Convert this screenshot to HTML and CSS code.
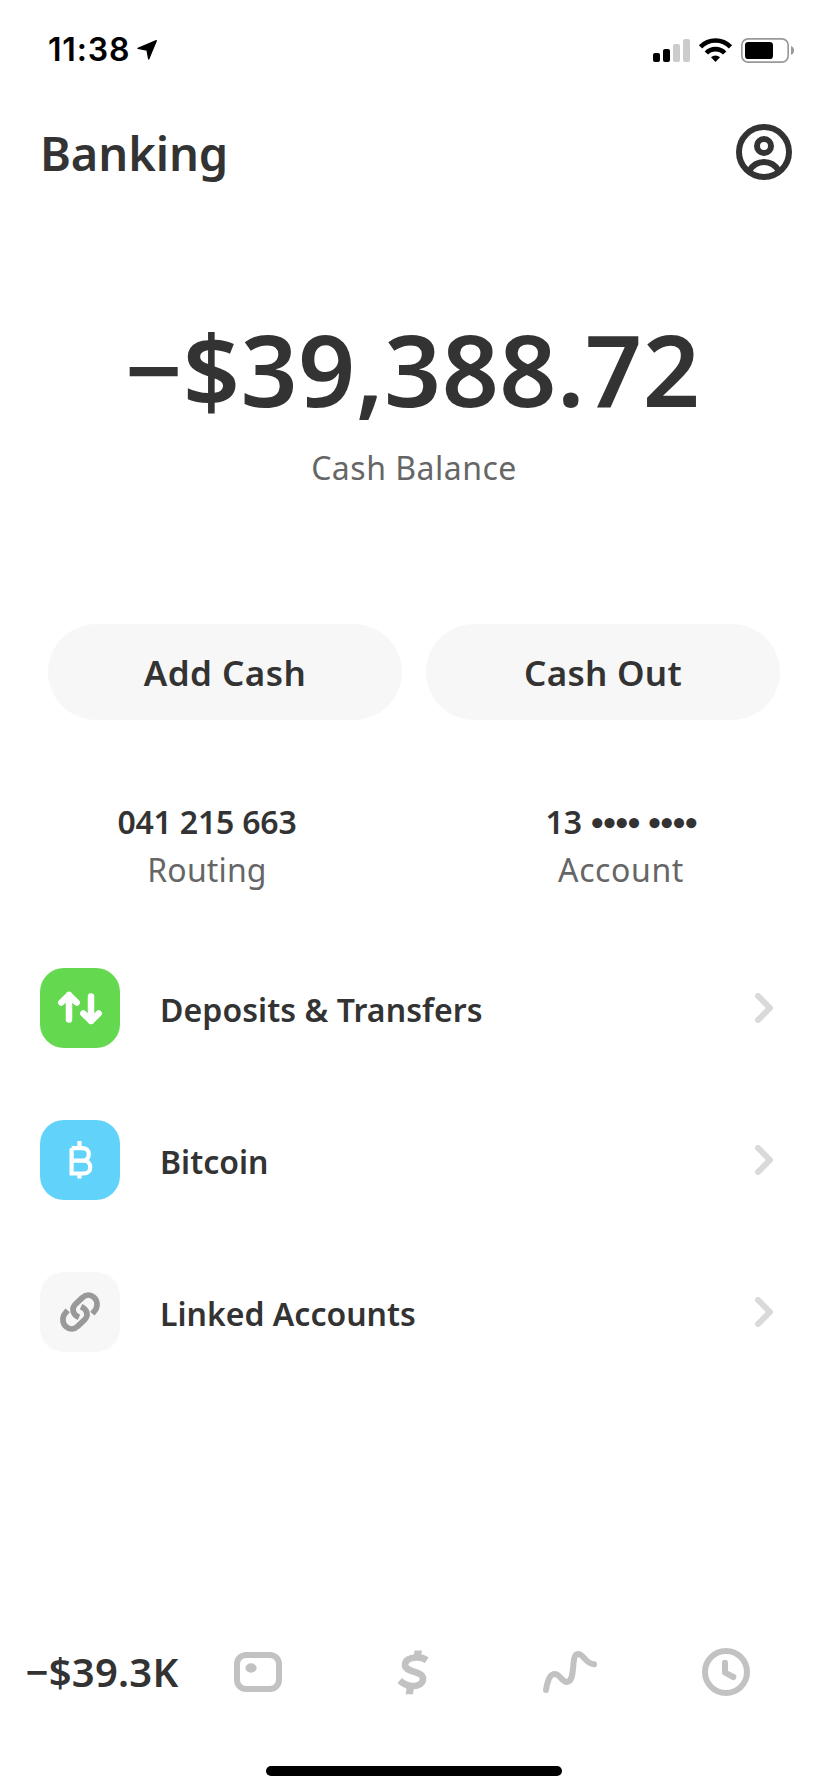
FILE: index.html
```html
<!DOCTYPE html>
<html lang="en">
<head>
<meta charset="utf-8">
<title>Banking</title>
<link rel="stylesheet" href="styles.css">
</head>
<body>
<div class="screen">
  <div class="status">
    <span class="time">11:38</span>
    <svg class="location" viewBox="405 114 72 72"><path d="M469 122 446 177 441 150 414 145Z" stroke="#000" stroke-width="4" stroke-linejoin="round"/></svg>
    <svg class="indicators" viewBox="66 45 432 84">
      <g><rect x="69" y="96" width="21" height="27" rx="6"/><rect x="99" y="84" width="21" height="39" rx="6"/></g>
      <g fill="#ccc"><rect x="129" y="69" width="21" height="54" rx="6"/><rect x="159" y="54" width="21" height="69" rx="6"/></g>
      <g fill="none" stroke="#000" stroke-width="14"><path d="M211.500 77.500A63 63 0 0 1 301.500 77.500"/><path d="M229 96A38 38 0 0 1 284 96"/></g>
      <path d="M256.500 123 243 109A19 19 0 0 1 270 109Z"/>
      <rect x="335.500" y="53.500" width="139" height="70" rx="19" fill="none" stroke="#999" stroke-width="5"/>
      <rect x="345" y="63" width="84" height="51" rx="10"/>
      <path d="M483 75C495 79 495 98 483 102Z" fill="#999"/>
    </svg>
  </div>

  <header class="header">
    <h1 class="title">Banking</h1>
    <svg class="profile" viewBox="318 312 168 168" fill="none" stroke="#333" stroke-width="18">
      <circle cx="402" cy="396" r="75"/><circle cx="402" cy="378" r="21"/>
      <path d="M357 453C368 435 384 426 402 426S436 435 447 453"/>
    </svg>
  </header>

  <section class="balance">
    <div class="amount">−$39,388.72</div>
    <div class="caption">Cash Balance</div>
  </section>

  <div class="actions">
    <button class="pill">Add Cash</button>
    <button class="pill pill-out">Cash Out</button>
  </div>

  <div class="numbers">
    <div class="number"><div class="value">041 215 663</div><div class="label">Routing</div></div>
    <div class="number"><div class="value">13 <span class="dots">•••• ••••</span></div><div class="label label-account">Account</div></div>
  </div>

  <div class="list">
    <div class="row">
      <div class="tile tile-green">
        <svg viewBox="0 0 80 80" fill="none" stroke="#fff" stroke-width="6.500" stroke-linecap="round" stroke-linejoin="round"><path d="M29 51.500V27M21.300 34.500 29 27 36.700 34.500M51 28.500V53M43.300 45.500 51 53 58.700 45.500"/></svg>
      </div>
      <span class="name name-deposits">Deposits &amp; Transfers</span>
      <svg class="chevron" viewBox="0 0 18 30"><path d="M3 3 15 15 3 27"/></svg>
    </div>
    <div class="row">
      <div class="tile tile-blue">
        <svg viewBox="0 0 80 80" fill="none" stroke="#fff" stroke-width="4.200"><path d="M31.600 28.200V53.500H43.500C47.600 53.500 50.300 51 50.300 47.200S47.600 40.700 43.500 40.700H31.600M31.600 28.200H42.500C46.300 28.200 48.800 30.600 48.800 34.300S46.300 40.700 42.500 40.700M39.500 21V27M39.500 54V58.500"/></svg>
      </div>
      <span class="name">Bitcoin</span>
      <svg class="chevron" viewBox="0 0 18 30"><path d="M3 3 15 15 3 27"/></svg>
    </div>
    <div class="row">
      <div class="tile tile-gray">
        <svg viewBox="-45 -45 240 240" fill="none" stroke="#999" stroke-width="17"><path id="link" d="M112 80 118 73C130 60 128 41 117 31 106 21 92 22 82 32L61 52C49 64 52 82 72 91"/><use href="#link" transform="rotate(180 75 75)"/></svg>
      </div>
      <span class="name">Linked Accounts</span>
      <svg class="chevron" viewBox="0 0 18 30"><path d="M3 3 15 15 3 27"/></svg>
    </div>
  </div>

  <nav class="tabs">
    <span class="tab tab-balance">−$39.3K</span>
    <span class="tab"><svg class="card" viewBox="702 96 144 120"><rect x="711" y="105" width="126" height="102" rx="27"/><ellipse class="solid" cx="753" cy="144" rx="17" ry="14"/></svg></span>
    <span class="tab"><svg class="dollar" viewBox="-3 -1.500 150 165"><path d="M110 44C100 37 89 35 78 36 59 37 45 45 45 58 45 70 58 74 70 78 84 82 99 87 99 100 99 114 85 122 69 122 53 122 40 115 29 105"/><path class="solid" d="M74 15H96L92 34H70ZM50 126H72L69 146H47Z"/></svg></span>
    <span class="tab"><svg class="trend" viewBox="486 84 168 144"><path d="M498 210C502 184 510 162 524 162 540 162 546 186 560 186 590 186 570 102 594 102 612 102 614 130 642 133"/></svg></span>
    <span class="tab"><svg class="clock" viewBox="966 84 144 144"><circle cx="1038" cy="156" r="63"/><path d="M1035 128V158L1060 171"/></svg></span>
  </nav>
  <div class="home-indicator"></div>
</div>
</body>
</html>
```
FILE: styles.css
```css
* { box-sizing: border-box; }
body {
  margin: 0;
  background: #fff;
  color: #333;
  font-family: "Noto Sans", sans-serif;
}
svg { display: block; flex: none; }
.screen {
  display: flex;
  flex-direction: column;
  width: 828px;
  height: 1792px;
}

.status {
  display: flex;
  align-items: center;
  height: 99px;
  padding: 0 32px 0 48px;
  color: #000;
}
.time { width: 87px; font: 600 32px/40px Inter, sans-serif; letter-spacing: .84px; white-space: nowrap; }
.location { width: 24px; height: 24px; }
.indicators { width: 144px; height: 28px; margin-left: auto; }

.header {
  display: flex;
  align-items: center;
  justify-content: space-between;
  height: 106px;
  padding: 0 36px 0 40px;
}
.title { margin: 0; padding-top: 2px; font-size: 47px; line-height: 64px; font-weight: 600; letter-spacing: -.1px; }
.profile { width: 56px; height: 56px; }

.balance { margin-top: 103px; text-align: center; }
.amount { font-size: 100px; line-height: 120px; font-weight: 600; letter-spacing: .44px; padding-right: 3px; }
.caption { margin-top: 18px; font-size: 32px; line-height: 44px; letter-spacing: .5px; color: #666; }

.actions {
  display: grid;
  grid-template-columns: 1fr 1fr;
  gap: 24px;
  margin: 134px 48px 0;
}
.pill {
  height: 96px;
  border: 0;
  padding: 2px 0 0;
  border-radius: 48px;
  background: #f7f7f7;
  color: #333;
  font: 600 35px/48px "Noto Sans", sans-serif;
  letter-spacing: .45px;
}
.pill-out { letter-spacing: .3px; }

.numbers { display: grid; grid-template-columns: 1fr 1fr; margin-top: 80px; text-align: center; }
.value, .label { height: 44px; font-size: 32px; line-height: 44px; white-space: nowrap; }
.value { font-weight: 600; letter-spacing: -.2px; }
.dots {
  position: relative;
  top: -3px;
  font-family: Lato, sans-serif;
  font-size: 25px;
  line-height: 1;
  letter-spacing: -2.2px;
  word-spacing: 4px;
}
.label { margin-top: 4px; color: #666; letter-spacing: .15px; }
.label-account { letter-spacing: .6px; }

.list { display: grid; gap: 72px; margin-top: 76px; padding: 0 55px 0 40px; }
.row { display: flex; align-items: center; height: 80px; }
.tile { width: 80px; height: 80px; border-radius: 24px; }
.tile-green { background: #64d84f; }
.tile-blue { background: #61d3fa; }
.tile-gray { background: #f7f7f7; }
.name { flex: 1; padding: 4px 0 0 40px; font-size: 32px; line-height: 44px; font-weight: 600; }
.name-deposits { letter-spacing: .08px; }
.chevron { width: 18px; height: 30px; fill: none; stroke: #d9d9d9; stroke-width: 6; stroke-linecap: round; stroke-linejoin: round; }

.tabs {
  display: grid;
  grid-template-columns: repeat(5, 156px);
  height: 96px;
  margin-top: auto;
  padding: 0 24px;
}
.tab { display: flex; align-items: center; justify-content: center; }
.tab-balance { padding-bottom: 1px; font-size: 40px; font-weight: 600; letter-spacing: .23px; white-space: nowrap; }
.tab svg { fill: none; stroke: #c2c2c2; stroke-width: 18; }
.tab .solid { fill: #c2c2c2; stroke: none; }
.card { width: 48px; height: 40px; }
.tab .dollar { width: 50px; height: 55px; stroke-width: 20; }
.trend { width: 56px; height: 48px; stroke-linecap: round; }
.clock { width: 48px; height: 48px; stroke-linecap: round; stroke-linejoin: round; }

.home-indicator {
  width: 296px;
  height: 10px;
  margin: 46px auto 16px;
  border-radius: 5px;
  background: #000;
  flex: none;
}
```
